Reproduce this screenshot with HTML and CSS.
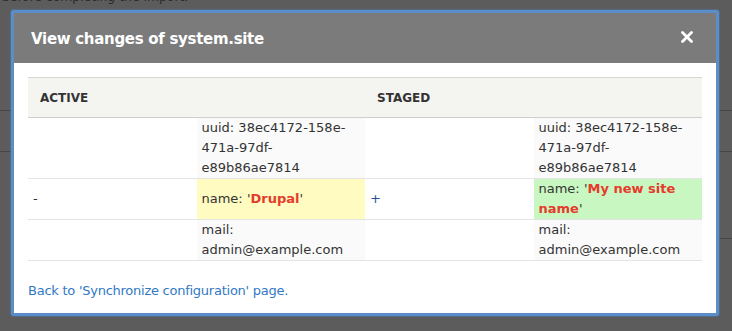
FILE: index.html
```html
<!DOCTYPE html>
<html>
<head>
<meta charset="utf-8">
<link rel="stylesheet" href="styles.css">
</head>
<body>
<div class="page">
  <p class="intro">before completing the import.</p>
  <div class="page-rule rule-1"></div>
  <div class="page-rule rule-2"></div>
  <div class="page-rule rule-3"></div>
</div>
<div class="dialog" role="dialog">
  <div class="titlebar">
    <span class="title">View changes of system.site</span>
    <svg class="close" width="12" height="12" viewBox="0 0 12 12"><path d="M1.5 1.5 L10.5 10.5 M10.5 1.5 L1.5 10.5" stroke="#fff" stroke-width="2.8" stroke-linecap="round"/></svg>
  </div>
  <div class="content">
    <table class="diff">
      <thead>
        <tr><th colspan="2">Active</th><th colspan="2">Staged</th></tr>
      </thead>
      <tbody>
        <tr>
          <td class="marker"></td>
          <td class="ctx">uuid: 38ec4172-<wbr>158e-<wbr>471a-<wbr>97df-<wbr>e89b86ae7814</td>
          <td class="marker"></td>
          <td class="ctx">uuid: 38ec4172-<wbr>158e-<wbr>471a-<wbr>97df-<wbr>e89b86ae7814</td>
        </tr>
        <tr>
          <td class="marker">-</td>
          <td class="deleted">name: '<span class="change">Drupal</span>'</td>
          <td class="marker plus">+</td>
          <td class="added">name: '<span class="change">My new site name</span>'</td>
        </tr>
        <tr>
          <td class="marker"></td>
          <td class="ctx">mail: admin@example.com</td>
          <td class="marker"></td>
          <td class="ctx">mail: admin@example.com</td>
        </tr>
      </tbody>
    </table>
    <a class="back" href="#">Back to 'Synchronize configuration' page.</a>
  </div>
</div>
</body>
</html>
```

FILE: styles.css
```css
html, body {
  margin: 0;
  padding: 0;
}
body {
  width: 732px;
  height: 331px;
  overflow: hidden;
  background: #5c5c5c;
  font-family: "DejaVu Sans", Verdana, sans-serif;
  position: relative;
}
.page {
  height: 331px;
}
.intro {
  margin: -11px 0 0 2px;
  font-size: 12.4px;
  line-height: 16px;
  color: #2a2a2a;
}
.page-rule {
  height: 1px;
  background: #464646;
}
.rule-1 { margin-top: 105px; }
.rule-2 { margin-top: 40px; }
.rule-3 { margin-top: 86px; margin-left: 600px; }

.dialog {
  position: absolute;
  left: 11px;
  top: 10px;
  width: 702px;
  height: 300px;
  border: 3px solid #5b8dc9;
  border-radius: 3px;
  box-shadow: 0 0 1px 1px rgba(80, 130, 190, 0.45);
  background: #fff;
  display: flex;
  flex-direction: column;
}
.titlebar {
  height: 50px;
  background: #7b7b7b;
  display: flex;
  align-items: center;
  justify-content: space-between;
  padding: 0 23px 0 17px;
  flex: none;
}
.title {
  color: #fff;
  font-weight: bold;
  font-size: 15px;
  line-height: 20px;
  letter-spacing: -0.3px;
  margin-top: 1px;
}
.close {
  display: block;
  margin-top: -2px;
}
.content {
  padding: 14px 14px 0 14px;
}
.diff {
  width: 674px;
  border-collapse: collapse;
  table-layout: fixed;
  font-size: 13px;
  line-height: 20px;
  color: #333;
}
.diff th {
  background: #f4f4f1;
  border-top: 1px solid #d6d6d2;
  border-bottom: 1px solid #cfcfcb;
  text-align: left;
  text-transform: uppercase;
  font-size: 12px;
  font-weight: bold;
  color: #333;
  height: 40px;
  padding: 0 12px;
  box-sizing: border-box;
}
.diff td {
  padding: 0 5px;
  border-bottom: 1px solid #e4e4e4;
  vertical-align: middle;
  width: 25%;
}
.diff td.ctx {
  background: #fafafa;
}
.diff td.deleted {
  background: #fffbc1;
}
.diff td.added {
  background: #c9f7c1;
}
.diff td.plus {
  color: #2c4f94;
}
.change {
  color: #e53b2c;
  font-weight: bold;
}
.back {
  display: block;
  margin-top: 20px;
  font-size: 13px;
  line-height: 20px;
  letter-spacing: -0.25px;
  color: #3179c4;
  text-decoration: none;
}
```
